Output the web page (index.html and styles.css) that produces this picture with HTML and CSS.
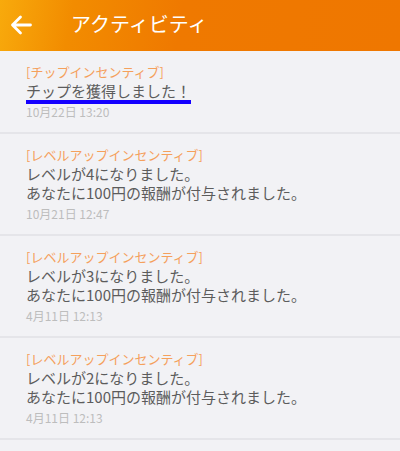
FILE: index.html
```html
<!DOCTYPE html>
<html lang="ja">
<head>
  <meta charset="UTF-8">
  <meta name="viewport" content="width=device-width, initial-scale=1.0">
  <title>アクティビティ</title>
  <link rel="stylesheet" href="styles.css">
</head>
<body>
  <header class="app-bar">
    <a class="back-btn" href="#">
      <svg width="22" height="20" viewBox="0 0 22 20">
        <path d="M2.5 10 H20.5 M10.5 2 L2.5 10 L10.5 18" fill="none" stroke="#ffffff" stroke-width="2.8" stroke-linecap="round" stroke-linejoin="round"/>
      </svg>
    </a>
    <h1 class="app-title">アクティビティ</h1>
  </header>

  <ul class="activity-list">
    <li class="activity">
      <div class="activity-tag">[チップインセンティブ]</div>
      <div class="activity-text"><span class="is-marked">チップを獲得しました！</span></div>
      <div class="activity-date is-tight">10月22日 13:20</div>
    </li>
    <li class="activity">
      <div class="activity-tag">[レベルアップインセンティブ]</div>
      <div class="activity-text">レベルが4になりました。<br>あなたに100円の報酬が付与されました。</div>
      <div class="activity-date">10月21日 12:47</div>
    </li>
    <li class="activity">
      <div class="activity-tag">[レベルアップインセンティブ]</div>
      <div class="activity-text">レベルが3になりました。<br>あなたに100円の報酬が付与されました。</div>
      <div class="activity-date">4月11日 12:13</div>
    </li>
    <li class="activity">
      <div class="activity-tag">[レベルアップインセンティブ]</div>
      <div class="activity-text">レベルが2になりました。<br>あなたに100円の報酬が付与されました。</div>
      <div class="activity-date">4月11日 12:13</div>
    </li>
  </ul>
</body>
</html>
```

FILE: styles.css
```css
body {
  margin: 0;
  background-color: #f2f2f5;
  color: #555555;
  font-family: "Noto Sans CJK JP", "Noto Sans", sans-serif;
}

.app-bar {
  display: flex;
  align-items: center;
  height: 51px;
  background: linear-gradient(100deg, #f8aa0c 0%, #f28c00 18%, #ef7900 45%, #ef7700 100%);
  color: #ffffff;
}

.back-btn {
  display: flex;
  align-items: center;
  margin-left: 10px;
  margin-top: -2px;
}

.app-title {
  margin: 0 0 0 39px;
  font-size: 20px;
  font-weight: normal;
  line-height: 1;
  margin-top: -4px;
}

.activity-list {
  list-style: none;
  margin: 0;
  padding: 0;
}

.activity {
  padding: 11px 26px 12px;
  border-bottom: 2px solid #e5e5e9;
}

.activity-tag {
  font-size: 13px;
  line-height: 19px;
  color: #f5a05c;
}

.activity-text {
  font-size: 15px;
  line-height: 19px;
  color: #5c5c5c;
}

.is-marked {
  display: inline-block;
  border-bottom: 4px solid #1400ff;
}

.activity-date {
  margin-top: 4px;
  font-size: 12px;
  line-height: 16px;
  color: #bdbdbd;
}

.activity-date.is-tight {
  margin-top: 0;
}
```
